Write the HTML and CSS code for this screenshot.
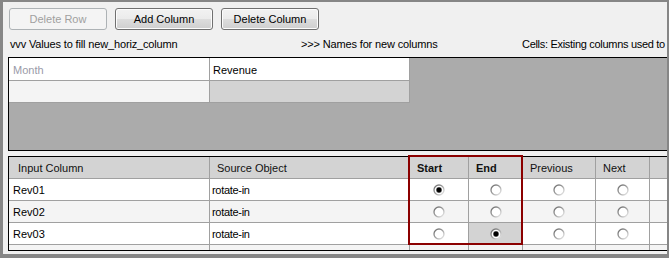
FILE: index.html
```html
<!DOCTYPE html>
<html>
<head>
<meta charset="utf-8">
<link rel="stylesheet" href="styles.css">
</head>
<body>
<div class="window">
  <svg class="defs" width="0" height="0" aria-hidden="true">
    <defs>
      <linearGradient id="rg" x1="0" y1="0" x2="1" y2="1">
        <stop offset="0" stop-color="#6a6a6a"/>
        <stop offset="0.45" stop-color="#9a9a9a"/>
        <stop offset="1" stop-color="#f0f0f0"/>
      </linearGradient>
    </defs>
  </svg>
  <div class="toolbar">
    <button class="btn" disabled>Delete Row</button>
    <button class="btn">Add Column</button>
    <button class="btn">Delete Column</button>
  </div>
  <div class="labels">
    <span class="lbl lbl-values">vvv Values to fill new_horiz_column</span>
    <span class="lbl lbl-names">&gt;&gt;&gt; Names for new columns</span>
    <span class="lbl lbl-cells">Cells: Existing columns used to</span>
  </div>
  <div class="grid-top">
    <div class="trow trow-head">
      <div class="cell placeholder">Month</div>
      <div class="cell cell-rev">Revenue</div>
    </div>
    <div class="trow trow-new">
      <div class="cell cell-light"></div>
      <div class="cell cell-sel"></div>
    </div>
  </div>
  <div class="grid-bottom">
    <div class="grid-clip">
      <div class="brow bhead">
        <div class="cell h-input">Input Column</div>
        <div class="cell h-norm">Source Object</div>
        <div class="cell h-bold">Start</div>
        <div class="cell h-bold">End</div>
        <div class="cell h-norm">Previous</div>
        <div class="cell h-norm">Next</div>
        <div class="cell"></div>
      </div>
      <div class="brow">
        <div class="cell c-name">Rev01</div>
        <div class="cell c-src">rotate-in</div>
        <div class="cell c-radio"><svg class="radio" viewBox="0 0 12 12"><circle cx="6" cy="6" r="5" fill="#fff" stroke="url(#rg)" stroke-width="1.3"/><circle cx="6" cy="6" r="3" fill="#7a7a7a"/><circle cx="6" cy="6" r="2.4" fill="#000"/></svg></div>
        <div class="cell c-radio"><svg class="radio" viewBox="0 0 12 12"><circle cx="6" cy="6" r="5" fill="#fff" stroke="url(#rg)" stroke-width="1.3"/></svg></div>
        <div class="cell c-radio"><svg class="radio" viewBox="0 0 12 12"><circle cx="6" cy="6" r="5" fill="#fff" stroke="url(#rg)" stroke-width="1.3"/></svg></div>
        <div class="cell c-radio"><svg class="radio" viewBox="0 0 12 12"><circle cx="6" cy="6" r="5" fill="#fff" stroke="url(#rg)" stroke-width="1.3"/></svg></div>
        <div class="cell"></div>
      </div>
      <div class="brow brow-alt">
        <div class="cell c-name">Rev02</div>
        <div class="cell c-src">rotate-in</div>
        <div class="cell c-radio"><svg class="radio" viewBox="0 0 12 12"><circle cx="6" cy="6" r="5" fill="#fff" stroke="url(#rg)" stroke-width="1.3"/></svg></div>
        <div class="cell c-radio"><svg class="radio" viewBox="0 0 12 12"><circle cx="6" cy="6" r="5" fill="#fff" stroke="url(#rg)" stroke-width="1.3"/></svg></div>
        <div class="cell c-radio"><svg class="radio" viewBox="0 0 12 12"><circle cx="6" cy="6" r="5" fill="#fff" stroke="url(#rg)" stroke-width="1.3"/></svg></div>
        <div class="cell c-radio"><svg class="radio" viewBox="0 0 12 12"><circle cx="6" cy="6" r="5" fill="#fff" stroke="url(#rg)" stroke-width="1.3"/></svg></div>
        <div class="cell"></div>
      </div>
      <div class="brow">
        <div class="cell c-name">Rev03</div>
        <div class="cell c-src">rotate-in</div>
        <div class="cell c-radio"><svg class="radio" viewBox="0 0 12 12"><circle cx="6" cy="6" r="5" fill="#fff" stroke="url(#rg)" stroke-width="1.3"/></svg></div>
        <div class="cell c-radio c-selected"><svg class="radio" viewBox="0 0 12 12"><circle cx="6" cy="6" r="5" fill="#fff" stroke="url(#rg)" stroke-width="1.3"/><circle cx="6" cy="6" r="3" fill="#7a7a7a"/><circle cx="6" cy="6" r="2.4" fill="#000"/></svg></div>
        <div class="cell c-radio"><svg class="radio" viewBox="0 0 12 12"><circle cx="6" cy="6" r="5" fill="#fff" stroke="url(#rg)" stroke-width="1.3"/></svg></div>
        <div class="cell c-radio"><svg class="radio" viewBox="0 0 12 12"><circle cx="6" cy="6" r="5" fill="#fff" stroke="url(#rg)" stroke-width="1.3"/></svg></div>
        <div class="cell"></div>
      </div>
      <div class="brow brow-alt">
        <div class="cell c-name"></div>
        <div class="cell c-src"></div>
        <div class="cell c-radio"><svg class="radio" viewBox="0 0 12 12"><circle cx="6" cy="6" r="5" fill="#fff" stroke="url(#rg)" stroke-width="1.3"/></svg></div>
        <div class="cell c-radio"><svg class="radio" viewBox="0 0 12 12"><circle cx="6" cy="6" r="5" fill="#fff" stroke="url(#rg)" stroke-width="1.3"/></svg></div>
        <div class="cell c-radio"><svg class="radio" viewBox="0 0 12 12"><circle cx="6" cy="6" r="5" fill="#fff" stroke="url(#rg)" stroke-width="1.3"/></svg></div>
        <div class="cell c-radio"><svg class="radio" viewBox="0 0 12 12"><circle cx="6" cy="6" r="5" fill="#fff" stroke="url(#rg)" stroke-width="1.3"/></svg></div>
        <div class="cell"></div>
      </div>
    </div>
    <div class="highlight"></div>
  </div>
</div>
</body>
</html>
```
FILE: styles.css
```css
html, body {
  margin: 0;
  padding: 0;
  background: #f0f0f0;
}

.window {
  width: 669px;
  height: 258px;
  box-sizing: border-box;
  border-style: solid;
  border-color: #868686;
  border-width: 2px 2px 4px 3px;
  background: #f0f0f0;
  overflow: hidden;
  font-family: "Liberation Sans", Arial, sans-serif;
  font-size: 11px;
  color: #000;
}

.defs {
  display: block;
  width: 0;
  height: 0;
  overflow: hidden;
}

.toolbar {
  display: flex;
  gap: 8px;
  padding: 6px 0 0 6px;
}

.btn {
  width: 98px;
  height: 22px;
  box-sizing: border-box;
  margin: 0;
  padding: 0;
  border: 1px solid #707070;
  border-radius: 3px;
  background: linear-gradient(#f2f2f2 0%, #ebebeb 50%, #dddddd 51%, #cfcfcf 100%);
  font-family: "Liberation Sans", Arial, sans-serif;
  font-size: 11px;
  color: #000;
  box-shadow: inset 0 0 0 1px #fcfcfc;
}

.btn:disabled {
  border-color: #adb2b5;
  background: #f4f4f4;
  color: #a0a0a0;
  box-shadow: none;
}

.labels {
  display: flex;
  margin-top: 6px;
  height: 14px;
  line-height: 14px;
  padding-left: 7px;
  padding-top: 1px;
  white-space: nowrap;
}

.lbl-values { width: 291px; flex: none; letter-spacing: -0.15px; }
.lbl-names { width: 221px; flex: none; letter-spacing: -0.15px; }
.lbl-cells { flex: none; letter-spacing: -0.3px; }

.grid-top {
  margin: 6px 0 0 5px;
  width: 680px;
  height: 94px;
  box-sizing: border-box;
  border: 1px solid #000;
  background: #ababab;
}

.trow {
  display: grid;
  grid-template-columns: 201px 200px;
}

.trow-head { height: 23px; }
.trow-new { height: 22px; }

.cell {
  box-sizing: border-box;
  border-right: 1px solid #a0a0a0;
  border-bottom: 1px solid #a0a0a0;
  display: flex;
  align-items: center;
  white-space: nowrap;
  overflow: hidden;
}

.trow-head .cell {
  background: #fff;
  padding-top: 1px;
}

.placeholder {
  color: #9a9aa8;
  padding-left: 4px;
}

.cell-rev { padding-left: 3px; }
.cell-light { background: #f4f4f4; }
.cell-sel { background: #d3d3d3; }

.grid-bottom {
  position: relative;
  margin: 5px 0 0 5px;
  width: 680px;
  height: 95px;
  box-sizing: border-box;
  border: 1px solid #000;
  background: #fff;
}

.grid-clip {
  height: 93px;
  overflow: hidden;
}

.brow {
  display: grid;
  grid-template-columns: 201px 200px 59px 54px 73px 54px 1fr;
  height: 22px;
  background: #fff;
}

.brow-alt { background: #f4f4f4; }

.bhead { background: #d3d3d3; color: #111; }

.h-input { padding-left: 9px; }
.h-norm { padding-left: 7px; }
.h-bold { padding-left: 7px; font-weight: bold; }

.c-name { padding-left: 4px; }
.c-src { padding-left: 2px; letter-spacing: -0.3px; }

.c-radio { justify-content: center; }
.c-selected { background: #d3d3d3; }

.radio {
  width: 12px;
  height: 12px;
  display: block;
}

.highlight {
  position: absolute;
  top: -2px;
  left: 399px;
  width: 115px;
  height: 90px;
  box-sizing: border-box;
  border: 2px solid #8b0000;
  pointer-events: none;
}
```
